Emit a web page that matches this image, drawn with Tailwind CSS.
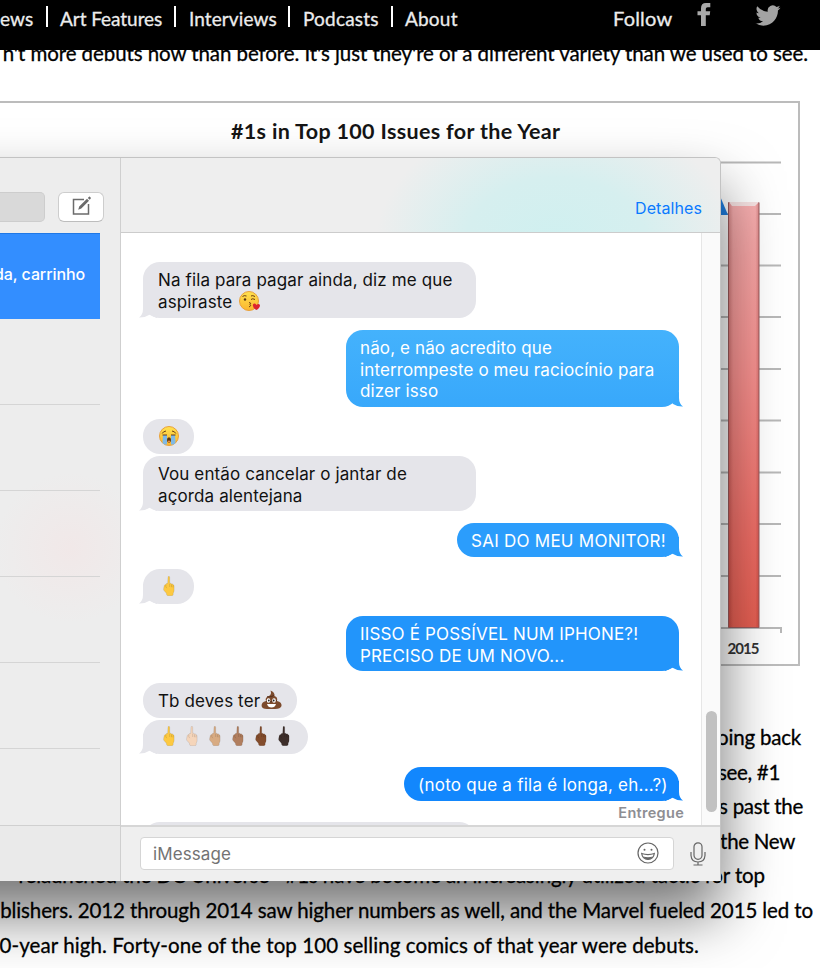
<!DOCTYPE html>
<html lang="pt">
<head>
<meta charset="utf-8">
<title>Mensagens</title>
<script src="https://cdn.jsdelivr.net/npm/@tailwindcss/browser@4"></script>
</head>
<body class="relative w-[820px] h-[968px] overflow-hidden bg-white font-['Lato',sans-serif]">
<svg class="absolute w-0 h-0">
  <defs>
    <linearGradient id="skin" x1="0" y1="0" x2="0" y2="1"><stop offset="0" stop-color="#ffe24f"/><stop offset="1" stop-color="#fbb52e"/></linearGradient>
    <symbol id="finger" viewBox="0 0 12 20"><path d="M5 1.2Q5 .3 5.8.3T6.700 1.200V7.300Q8 6.800 8.400 7.900 9.800 7.400 10 8.800 11.200 8.800 11.100 10.200V14.500Q11 16.300 10.200 17V18.600Q10.100 19.700 8.800 19.700H5Q3.800 19.700 3.600 18.600L3.400 17.200 1 14.600Q.3 13.600.7 12.200L1.200 9.700Q1.700 8.400 3 8.600 3.300 7 4.700 7.400Z" fill="currentColor" stroke="#000" stroke-opacity=".18" stroke-width=".5"/><path d="M6.700 8v3M8.500 8.400v2.800M10 9.400v2M2.800 9q-.4 2 1 3.200" fill="none" stroke="#000" stroke-opacity=".2" stroke-width=".6"/></symbol>
    <symbol id="tail-l" viewBox="0 0 18 20"><path d="M4 0V11Q4 16.500 0 19.600 6 19.800 10.500 16.800L18 20V0Z" fill="currentColor"/></symbol>
  </defs>
</svg>

<header class="relative z-10 flex h-[50px] bg-black text-[#ececec] text-[19px] leading-[38px] whitespace-nowrap [-webkit-text-stroke:0.3px]">
  <nav class="flex w-[613px] items-start">
    <span class="w-[46px] tracking-[0.1px]">ews</span><i class="mt-[6px] w-[2px] h-[21px] bg-white"></i>
    <span class="w-[126px] pl-[12px] tracking-[-0.05px]">Art Features</span><i class="mt-[6px] w-[2px] h-[21px] bg-white"></i>
    <span class="w-[112px] pl-[13px] tracking-[0.1px]">Interviews</span><i class="mt-[6px] w-[2px] h-[21px] bg-white"></i>
    <span class="w-[101px] pl-[13px] tracking-[0.2px]">Podcasts</span><i class="mt-[6px] w-[2px] h-[21px] bg-white"></i>
    <span class="pl-[12px] tracking-[0.2px]">About</span>
  </nav>
  <span class="w-[84px] text-[20px] leading-[36px] tracking-[0.2px]">Follow</span>
  <svg class="mt-[3px] w-[14px] h-[23px]" viewBox="0 0 14 23"><path d="M4 23V12.3H.5V8.2H4V5.2Q4 0 9 0H13.3V4.2H10.6Q8.8 4.2 8.8 5.8V8.2H13.2L12.7 12.3H8.8V23Z" fill="#a9a9a9"/></svg>
  <svg class="ml-[44px] mt-[3px] w-[26px] h-[25px]" viewBox="0 0 24 24"><path fill="#a3a3a3" d="M23.95 4.57a10 10 0 0 1-2.82.77 4.96 4.96 0 0 0 2.16-2.72 9.9 9.9 0 0 1-3.12 1.18 4.92 4.92 0 0 0-8.39 4.48A13.93 13.93 0 0 1 1.64 3.16a4.92 4.92 0 0 0 1.52 6.57 4.9 4.9 0 0 1-2.23-.61v.06a4.92 4.92 0 0 0 3.95 4.83 5 5 0 0 1-2.21.08 4.94 4.94 0 0 0 4.6 3.42A9.87 9.87 0 0 1 0 19.54a14 14 0 0 0 7.55 2.21c9.05 0 14-7.5 14-13.98 0-.21 0-.42-.02-.63a9.94 9.94 0 0 0 2.46-2.55z"/></svg>
</header>

<main class="-mt-[14px] text-[20.5px] leading-[34.6px] text-black whitespace-nowrap">
  <p class="flex w-[808px] h-[35px] justify-end tracking-[-0.08px] [-webkit-text-stroke:0.3px]">n't more debuts now than before. It's just they're of a different variety than we used to see.</p>

  <section class="mt-[30px] h-[565px] w-[800px] border-y-2 border-r-2 border-[#bcbcbc] bg-white">
    <h2 class="ml-[231px] mt-[10px] h-[37px] text-[21.500px] leading-[36px] font-bold tracking-[0.33px] text-[#151515]">#1s in Top 100 Issues for the Year</h2>
    <svg class="w-[798px] h-[512px]" viewBox="0 150 798 512">
      <defs>
        <linearGradient id="bar" x1="0" y1="0" x2="0" y2="1"><stop offset="0" stop-color="#f9b0b1"/><stop offset=".4" stop-color="#f8918f"/><stop offset=".8" stop-color="#ee6c64"/><stop offset="1" stop-color="#e65f52"/></linearGradient>
        <linearGradient id="shade"><stop offset="0" stop-color="#600" stop-opacity=".2"/><stop offset=".15" stop-color="#600" stop-opacity="0"/><stop offset=".88" stop-color="#600" stop-opacity="0"/><stop offset="1" stop-color="#600" stop-opacity=".22"/></linearGradient>
      </defs>
      <path d="M0 162.500H781M0 214H781M0 265.500H781M0 317H781M0 369H781M0 420.500H781M0 472.500H781M0 524H781M0 576H781M0 628H781V633" fill="none" stroke="#b8b8b8" stroke-width="2"/>
      <path d="M720 196L728 215H715Z" fill="#1e7ee0"/>
      <path d="M728.500 202.500H759V627.500H728.500Z" fill="url(#bar)"/><path d="M728.500 202.500H759V627.500H728.500Z" fill="url(#shade)" stroke="#9b5a5c"/>
      <path d="M729 202H759L755 206H732Z" fill="#f8e4e4"/>
      <text x="743.500" y="654" text-anchor="middle" font-size="15" font-weight="700" fill="#333" textLength="32">2015</text>
    </svg>
  </section>

  <div class="mt-[54px] [-webkit-text-stroke:0.3px]">
    <p class="flex w-[801px] justify-end tracking-[-0.2px]">going back</p>
    <p class="flex w-[780px] justify-end tracking-[-0.3px]">see, #1</p>
    <p class="flex w-[803px] justify-end tracking-[-0.3px]">debuts past the</p>
    <p class="flex w-[795px] justify-end tracking-[-0.3px]">the New</p>
    <p class="flex w-[765px] justify-end tracking-[-0.1px]">relaunched the DC Universe—#1s have become an increasingly utilized tactic for top</p>
    <p class="flex w-[813px] justify-end tracking-[-0.11px]">publishers. 2012 through 2014 saw higher numbers as well, and the Marvel fueled 2015 led to</p>
    <p class="flex w-[699px] justify-end tracking-[0.08px]">10-year high. Forty-one of the top 100 selling comics of that year were debuts.</p>
  </div>
</main>

<!-- Floating chat window -->
<div class="absolute -left-[160px] top-[157px] w-[881px] h-[724px] rounded-t-[6px] shadow-[0_33px_60px_rgba(0,0,0,0.55)]">
<div class="flex size-full pl-[160px] rounded-tr-[6px] overflow-hidden bg-[#eeeeee] border-t border-r border-[#c3c3c3] font-['Inter',sans-serif] whitespace-nowrap">
  <aside class="flex flex-col w-[121px] shrink-0 border-r border-[#cfcfcf] bg-[radial-gradient(circle_75px_at_70px_390px,#f1e8e8,#ededed)]">
    <div class="flex h-[75px] pt-[34px]">
      <div class="w-[45px] h-[30px] rounded-r-[5px] bg-[#d9d9d9] border border-l-0 border-[#cdcdcd]"></div>
      <div class="ml-[13px] w-[46px] h-[30px] rounded-[6px] bg-white border border-[#cdcdcd] border-b-[#bdbdbd] flex justify-center">
        <svg class="w-[22px] h-[22px] mt-[2px]" viewBox="0 0 22 22"><path d="M14 4.500H3.500V19H18.500V9" fill="none" stroke="#6b6b6b" stroke-width="1.500"/><path d="M8.200 14.700L9.200 11.400 17 3.700 19 5.700 11.300 13.500ZM17.800 2.900L19 1.700Q19.700 1.300 20.300 1.900T20.800 3.500L19.700 4.800Z" fill="#6b6b6b"/></svg>
      </div>
    </div>
    <div class="w-[100px] h-[86px] bg-[#338eff] border-t border-[#1f78e6] flex justify-end pr-[15px] text-white text-[16px] font-medium leading-[81px] tracking-[-0.1px]">da, carrinho</div>
    <div class="w-[100px] h-[86px] border-b border-[#d5d5d5]"></div>
    <div class="w-[100px] h-[86px] border-b border-[#d5d5d5]"></div>
    <div class="w-[100px] h-[86px] border-b border-[#d5d5d5]"></div>
    <div class="w-[100px] h-[86px] border-b border-[#d5d5d5]"></div>
    <div class="w-[100px] h-[86px] border-b border-[#d5d5d5]"></div>
    <div class="h-[76px]"></div>
    <div class="flex-1 border-t border-[#d0d0d0] bg-[#eaeaea]"></div>
  </aside>

  <section class="flex flex-col w-[600px] shrink-0">
    <div class="h-[75px] shrink-0 border-b border-[#cccccc] bg-[radial-gradient(ellipse_180px_130px_at_435px_85px,#cff0f0_0%,#d6efef_50%,#eeeeee_100%)] flex justify-end items-end pr-[19px] pb-[14px] text-[16px] leading-[20px] tracking-[0.08px] text-[#0a7aff]">Detalhes</div>

    <div class="flex h-[592px] shrink-0 overflow-hidden bg-white">
      <div class="relative flex flex-col w-[580px] pl-[22px] pr-[22px] pt-[29px] text-[17px] leading-[21.5px] tracking-[0.12px] text-[#111]">
        <div class="relative w-[333px] h-[56px] shrink-0 rounded-[17px] bg-[#e5e5ea] pl-[15px] pt-[8px]">
          <svg class="absolute -left-[4px] bottom-0 w-[18px] h-[20px] text-[#e5e5ea]"><use href="#tail-l"/></svg>
          <span class="relative block">Na fila para pagar ainda, diz me que</span>
          <span class="relative flex">aspiraste
            <svg class="ml-[7px] -mt-[1px] w-[21px] h-[21px]" viewBox="0 0 21 21"><circle cx="10" cy="10" r="9.500" fill="url(#skin)" stroke="#e9a03a"/><circle cx="6" cy="8.500" r="1.200" fill="#5b3610"/><path d="M3.500 5.500Q5 4 7.500 5M12 8.500Q13.500 7 16 8.500M12 5Q13.500 4 16 5.500M10 11.500Q13 12 11 13.500 13 14.500 10 16" fill="none" stroke="#6a3d12"/><path d="M17.500 19Q13 16.500 14 13.500 15.500 11.500 17.500 14 19.500 12 21 14 21 17 17.500 19Z" fill="#dc2430"/></svg>
          </span>
        </div>
        <div class="relative self-end mt-[12px] w-[333px] h-[77px] shrink-0 rounded-[17px] bg-linear-to-b from-[#44b2fc] to-[#38a8fb] pl-[14px] pt-[8px] text-white">
          <svg class="absolute -right-[4px] bottom-0 w-[18px] h-[20px] -scale-x-100 text-[#38a8fb]"><path d="M4 4V11Q4 16.500 0 19.600 6 19.800 10.500 16.800L8 10Z" fill="currentColor"/></svg>
          <span class="relative">não, e não acredito que<br>interrompeste o meu raciocínio para<br>dizer isso</span>
        </div>
        <div class="mt-[12px] w-[51px] h-[35px] shrink-0 rounded-[17px] bg-[#e5e5ea] pl-[16px] pt-[7px]">
          <svg class="w-[20px] h-[20px]" viewBox="0 0 20 20"><circle cx="10" cy="10" r="9.500" fill="url(#skin)" stroke="#e9a03a"/><path d="M4 9h4V18.500H5.500Q3.500 17.500 3.500 16ZM12 9h4L16.500 16Q16 18 14.500 18.500H12Z" fill="#7fb9e6"/><path d="M3.200 7.500Q4 5.500 7 5M13 5Q16 5.500 16.800 7.500M3.500 9H8M12 9h4.500" fill="none" stroke="#6a3d12"/><ellipse cx="10" cy="14" rx="2" ry="2.700" fill="#5b3610"/><ellipse cx="10" cy="15.300" rx="1.200" ry=".9" fill="#e68a4a"/></svg>
        </div>
        <div class="relative mt-[2px] w-[333px] h-[55px] shrink-0 rounded-[17px] bg-[#e5e5ea] pl-[15px] pt-[8px]">
          <svg class="absolute -left-[4px] bottom-0 w-[18px] h-[20px] text-[#e5e5ea]"><use href="#tail-l"/></svg>
          <span class="relative">Vou então cancelar o jantar de<br>açorda alentejana</span>
        </div>
        <div class="relative self-end mt-[12px] w-[222px] h-[34px] shrink-0 rounded-[17px] bg-[#2b9dfc] pl-[14px] pt-[8px] tracking-[0.25px] text-white">
          <svg class="absolute -right-[4px] bottom-0 w-[18px] h-[20px] -scale-x-100 text-[#2b9dfc]"><use href="#tail-l"/></svg>
          <span class="relative">SAI DO MEU MONITOR!</span>
        </div>
        <div class="relative mt-[12px] w-[51px] h-[35px] shrink-0 rounded-[17px] bg-[#e5e5ea] pl-[20px] pt-[7px]">
          <svg class="absolute -left-[4px] bottom-0 w-[18px] h-[20px] text-[#e5e5ea]"><use href="#tail-l"/></svg>
          <svg class="relative w-[12px] h-[20px] text-[#fdc941]"><use href="#finger"/></svg>
        </div>
        <div class="relative self-end mt-[12px] w-[333px] h-[55px] shrink-0 rounded-[17px] bg-[#2295fb] pl-[14px] pt-[8px] text-white">
          <svg class="absolute -right-[4px] bottom-0 w-[18px] h-[20px] -scale-x-100 text-[#2295fb]"><use href="#tail-l"/></svg>
          <span class="relative tracking-[0.16px]">IISSO É POSSÍVEL NUM IPHONE?!<br>PRECISO DE UM NOVO...</span>
        </div>
        <div class="mt-[12px] w-[154px] h-[35px] shrink-0 rounded-[17px] bg-[#e5e5ea] pl-[15px] pt-[8px] flex">Tb deves ter
          <svg class="ml-[1px] -mt-[1px] w-[21px] h-[20px]" viewBox="0 0 21 20"><path d="M9.500.5Q14 2 13.500 6 17 7 16 11 21 12 20.500 16 19.500 19 14 19H6Q1 19 .6 16 .3 12 5 11 3.500 7.500 8 6 11 4 9.500.5Z" fill="#7c4a2c"/><path d="M6 6.800Q12 7 13 5M5 11.500Q12 12.500 16 10.500" fill="none" stroke="#54301c"/><ellipse cx="7.500" cy="10.500" rx="1.800" ry="2.200" fill="#fff"/><ellipse cx="13" cy="10.500" rx="1.800" ry="2.200" fill="#fff"/><circle cx="7.800" cy="10.500" r=".9" fill="#222"/><circle cx="12.700" cy="10.500" r=".9" fill="#222"/><path d="M6 14H15Q14 17.500 10.500 17.500T6 14Z" fill="#fff"/></svg>
        </div>
        <div class="relative mt-[2px] w-[165px] h-[34px] shrink-0 rounded-[17px] bg-[#e5e5ea] pl-[20px] pt-[6px] flex gap-[11px]">
          <svg class="absolute -left-[4px] bottom-0 w-[18px] h-[20px] text-[#e5e5ea]"><use href="#tail-l"/></svg>
          <svg class="relative w-[12px] h-[20px] text-[#fdc941]"><use href="#finger"/></svg>
          <svg class="relative w-[12px] h-[20px] text-[#f5d5ba]"><use href="#finger"/></svg>
          <svg class="relative w-[12px] h-[20px] text-[#d8ab82]"><use href="#finger"/></svg>
          <svg class="relative w-[12px] h-[20px] text-[#b17e5e]"><use href="#finger"/></svg>
          <svg class="relative w-[12px] h-[20px] text-[#834c2c]"><use href="#finger"/></svg>
          <svg class="relative w-[12px] h-[20px] text-[#3d2e2a]"><use href="#finger"/></svg>
        </div>
        <div class="relative self-end mt-[13px] w-[275px] h-[34px] shrink-0 rounded-[17px] bg-[#1287fd] pl-[14px] pt-[8px] tracking-[0.24px] text-white">
          <svg class="absolute -right-[4px] bottom-0 w-[18px] h-[20px] -scale-x-100 text-[#1287fd]"><use href="#tail-l"/></svg>
          <span class="relative">(noto que a fila é longa, eh...?)</span>
        </div>
        <div class="self-end mt-[2px] -mr-[5px] h-[19px] shrink-0 text-[14.500px] leading-[19px] tracking-[0.3px] font-semibold text-[#8e8e93]">Entregue</div>
        <div class="w-[333px] h-[35px] shrink-0 rounded-[17px] bg-[#e5e5ea]"></div>
      </div>
      <div class="w-[20px] bg-[#fafafa] border-l border-[#e6e6e6] pl-[4px] pt-[478px]"><div class="w-[11px] h-[101px] rounded-full bg-[#c1c1c1]"></div></div>
    </div>

    <div class="flex flex-1 border-t-2 border-[#d6d6d6] bg-[#efefef] pl-[19px] pt-[10px]">
      <div class="flex items-center justify-between w-[534px] h-[33px] rounded-[4px] bg-white border border-[#d5d5d5] pl-[12px] pr-[14px] text-[17px] tracking-[0.1px] text-[#737373]"><span class="pt-[2px]">iMessage</span>
        <svg class="-mt-[2px] w-[22px] h-[22px]" viewBox="0 0 22 22" fill="none" stroke="#666" stroke-width="1.200"><circle cx="11" cy="11" r="10"/><circle cx="7.500" cy="7.700" r="1" fill="#666" stroke="none"/><circle cx="14.500" cy="7.700" r="1" fill="#666" stroke="none"/><path d="M4.700 11.500Q11 13.700 17.300 11.500 16.500 17.500 11 17.500T4.700 11.500Z"/><path d="M6 14.500Q11 16 16 14.500 14 17.500 11 17.500T6 14.500Z" fill="#666" stroke="none"/></svg>
      </div>
      <svg class="ml-[16px] mt-[5px] w-[16px] h-[24px]" viewBox="0 0 16 24" fill="none" stroke="#666" stroke-width="1.200"><rect x="4" y=".8" width="8" height="16.500" rx="4"/><path d="M1 10V13.500Q1.500 20 8 20T15 13.500V10M8 20V23M3.500 23H12.500"/></svg>
    </div>
  </section>
</div>
</div>
</body>
</html>
